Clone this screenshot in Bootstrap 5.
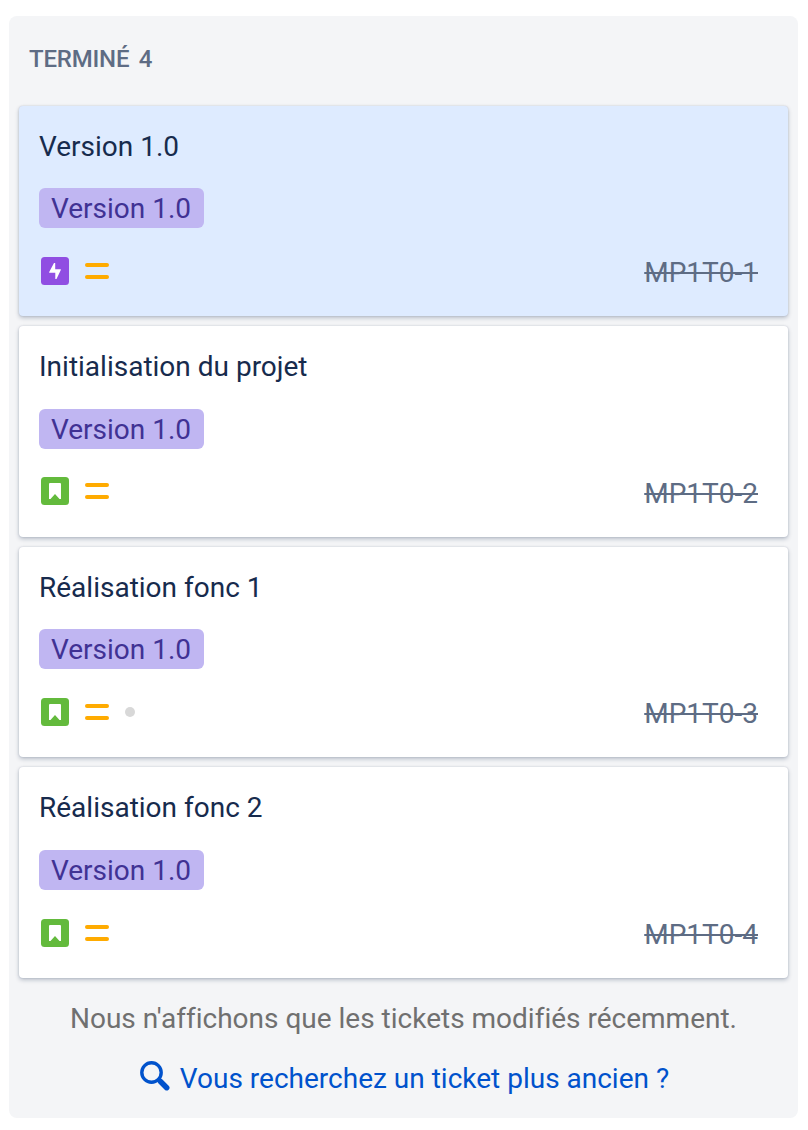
<!DOCTYPE html>
<html lang="fr">
<head>
<meta charset="utf-8">
<meta name="viewport" content="width=device-width, initial-scale=1">
<title>Terminé</title>
<link href="https://cdn.jsdelivr.net/npm/bootstrap@5.3.0/dist/css/bootstrap.min.css" rel="stylesheet">
<style>
body { font-family: Roboto, sans-serif; font-size: 28px; line-height: 40px; color: #172b4d; background: #fff; font-variant-ligatures: none; }
.board-column { width: 789px; height: 1102px; margin: 16px 0 0 9px; padding: 0 10px; background: #f4f5f7; border-radius: 8px; }
.column-title { height: 89.6px; padding: 29px 0 0 10px; font-size: 24px; font-weight: 500; letter-spacing: -.2px; color: #5e6c84; gap: 9.5px; }
.ticket-list { gap: 10px; }
.ticket { --bs-card-border-width: 0; --bs-card-border-radius: 4px; --bs-card-bg: #fff; height: 210.6px; padding: 20.95px 30px 0 20px; box-shadow: 0 2px 4px rgba(9,30,66,.25), 0 0 2px rgba(9,30,66,.16); color: #172b4d; }
.ticket.selected { --bs-card-bg: #deebff; }
.epic-label { height: 40px; margin-top: 21.5px; padding: 1px 12.5px 0 12px; border-radius: 6px; background: #c0b6f2; color: #403294; }
.ticket-foot { margin-top: 22.75px; height: 40px; padding-left: 2px; }
.ticket-foot svg { flex: none; }
.ticket-key { padding-top: 5px; color: #5e6c84; }
.note { margin-top: 21px; color: #707070; }
.search-link { margin-top: 20px; color: #0052cc; gap: 10px; padding-left: 1px; }
.search-link svg { margin: 2px 0 0 1px; }
</style>
</head>
<body>
<svg class="d-none">
  <symbol id="epic" viewBox="0 0 28 28"><rect width="28" height="28" rx="3.5" fill="#904ee2"/><path d="M13 6h1.200v6.200h5.300q.700 0 .300.800L15.500 22h-1.200v-6.200H8.700q-.900 0-.500-.900z" fill="#fff"/></symbol>
  <symbol id="story" viewBox="0 0 28 28"><rect width="28" height="28" rx="3.5" fill="#63ba3c"/><path d="M9 6h10q1 0 1 1v15h-1.500L14 17l-4.500 5H8V7q0-1 1-1z" fill="#fff"/></symbol>
  <symbol id="medium" viewBox="0 0 24 16"><rect width="24" height="4" rx="2" fill="#ffab00"/><rect y="12" width="24" height="4" rx="2" fill="#ffab00"/></symbol>
</svg>
<main class="board-column d-flex flex-column">
  <h2 class="column-title d-flex m-0"><span>TERMINÉ</span><span>4</span></h2>
  <div class="ticket-list d-flex flex-column">
    <article class="card ticket selected">
      <div>Version 1.0</div>
      <span class="epic-label align-self-start">Version 1.0</span>
      <div class="ticket-foot d-flex align-items-center">
        <svg width="28" height="28"><use href="#epic"/></svg>
        <svg class="ms-3" width="24" height="16"><use href="#medium"/></svg>
        <s class="ticket-key ms-auto">MP1T0-1</s>
      </div>
    </article>
    <article class="card ticket">
      <div>Initialisation du projet</div>
      <span class="epic-label align-self-start">Version 1.0</span>
      <div class="ticket-foot d-flex align-items-center">
        <svg width="28" height="28"><use href="#story"/></svg>
        <svg class="ms-3" width="24" height="16"><use href="#medium"/></svg>
        <s class="ticket-key ms-auto">MP1T0-2</s>
      </div>
    </article>
    <article class="card ticket">
      <div>Réalisation fonc 1</div>
      <span class="epic-label align-self-start">Version 1.0</span>
      <div class="ticket-foot d-flex align-items-center">
        <svg width="28" height="28"><use href="#story"/></svg>
        <svg class="ms-3" width="24" height="16"><use href="#medium"/></svg>
        <svg class="ms-3" width="10" height="10"><circle cx="5" cy="5" r="5" fill="#d8d8d8"/></svg>
        <s class="ticket-key ms-auto">MP1T0-3</s>
      </div>
    </article>
    <article class="card ticket">
      <div>Réalisation fonc 2</div>
      <span class="epic-label align-self-start">Version 1.0</span>
      <div class="ticket-foot d-flex align-items-center">
        <svg width="28" height="28"><use href="#story"/></svg>
        <svg class="ms-3" width="24" height="16"><use href="#medium"/></svg>
        <s class="ticket-key ms-auto">MP1T0-4</s>
      </div>
    </article>
  </div>
  <div class="note text-center">Nous n'affichons que les tickets modifiés récemment.</div>
  <a class="search-link d-flex justify-content-center align-items-start text-decoration-none" href="#">
    <svg width="30" height="30" viewBox="0 0 30 30" fill="none" stroke="currentColor"><circle cx="11.500" cy="11.500" r="9.700" stroke-width="3.400"/><path d="M17.500 17.500l3 3" stroke-width="4"/><path d="M20.500 20.500l6.200 6.200" stroke-width="5.500" stroke-linecap="round"/></svg>
    <span>Vous recherchez un ticket plus ancien ?</span>
  </a>
</main>
<script src="https://cdn.jsdelivr.net/npm/bootstrap@5.3.0/dist/js/bootstrap.bundle.min.js"></script>
</body>
</html>
